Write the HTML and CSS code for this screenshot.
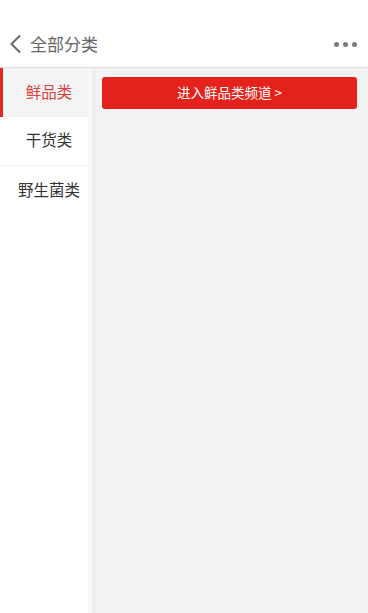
FILE: index.html
```html
<!DOCTYPE html>
<html lang="zh">
<head>
<meta charset="utf-8">
<title>全部分类</title>
<link rel="stylesheet" href="styles.css">
</head>
<body>
<div class="page">
  <header class="header">
    <div class="header-left">
      <svg class="back" width="14" height="20" viewBox="0 0 14 20"><path d="M11 1.5 L2.5 10 L11 18.5" fill="none" stroke="#666" stroke-width="2"/></svg>
      <span class="title">全部分类</span>
    </div>
    <div class="more"><i></i><i></i><i></i></div>
  </header>
  <div class="body">
    <nav class="sidebar">
      <div class="item active">鲜品类</div>
      <div class="item">干货类</div>
      <div class="item">野生菌类</div>
    </nav>
    <main class="content">
      <a class="enter-btn">进入鲜品类频道 &gt;</a>
    </main>
  </div>
</div>
</body>
</html>
```
FILE: styles.css
```css
* { box-sizing: border-box; }
html, body { margin: 0; padding: 0; height: 100%; }
body {
  font-family: "Noto Sans CJK SC", "Noto Sans", sans-serif;
  background: #fff;
}
.page {
  display: flex;
  flex-direction: column;
  height: 613px;
}
.header {
  height: 68px;
  padding-top: 21px;
  display: flex;
  align-items: center;
  justify-content: space-between;
  background: #fff;
  border-bottom: 1px solid #e3dcdc;
}
.header-left {
  display: flex;
  align-items: center;
  padding-left: 9px;
}
.back { display: block; margin-right: 7px; }
.title {
  font-size: 17px;
  color: #666;
  line-height: 20px;
}
.more {
  display: flex;
  gap: 4px;
  padding-right: 11px;
}
.more i {
  width: 5px;
  height: 5px;
  border-radius: 50%;
  background: #7a7a7a;
  display: block;
}
.body {
  flex: 1;
  display: flex;
}
.sidebar {
  width: 92px;
  flex: none;
  background: #fff;
  border-right: 4px solid #f8f8f8;
}
.item {
  height: 49px;
  display: flex;
  align-items: center;
  justify-content: center;
  padding: 0 0 4px 10px;
  font-size: 15.5px;
  color: #333;
  border-bottom: 1px solid #f2f2f2;
}
.item.active {
  background: #f4f4f4;
  color: #d9433d;
  border-left: 3px solid #e3281f;
  padding-left: 7px;
  border-bottom: none;
}
.item:last-child { border-bottom: none; }
.content {
  flex: 1;
  background: #f3f3f3;
  border-left: 4px solid #efefef;
  padding: 9px 11px 0 6px;
}
.enter-btn {
  display: flex;
  align-items: center;
  justify-content: center;
  height: 32px;
  padding-bottom: 3px;
  background: #e4221b;
  color: #fff;
  border-radius: 3px;
  font-size: 13.5px;
}
```
